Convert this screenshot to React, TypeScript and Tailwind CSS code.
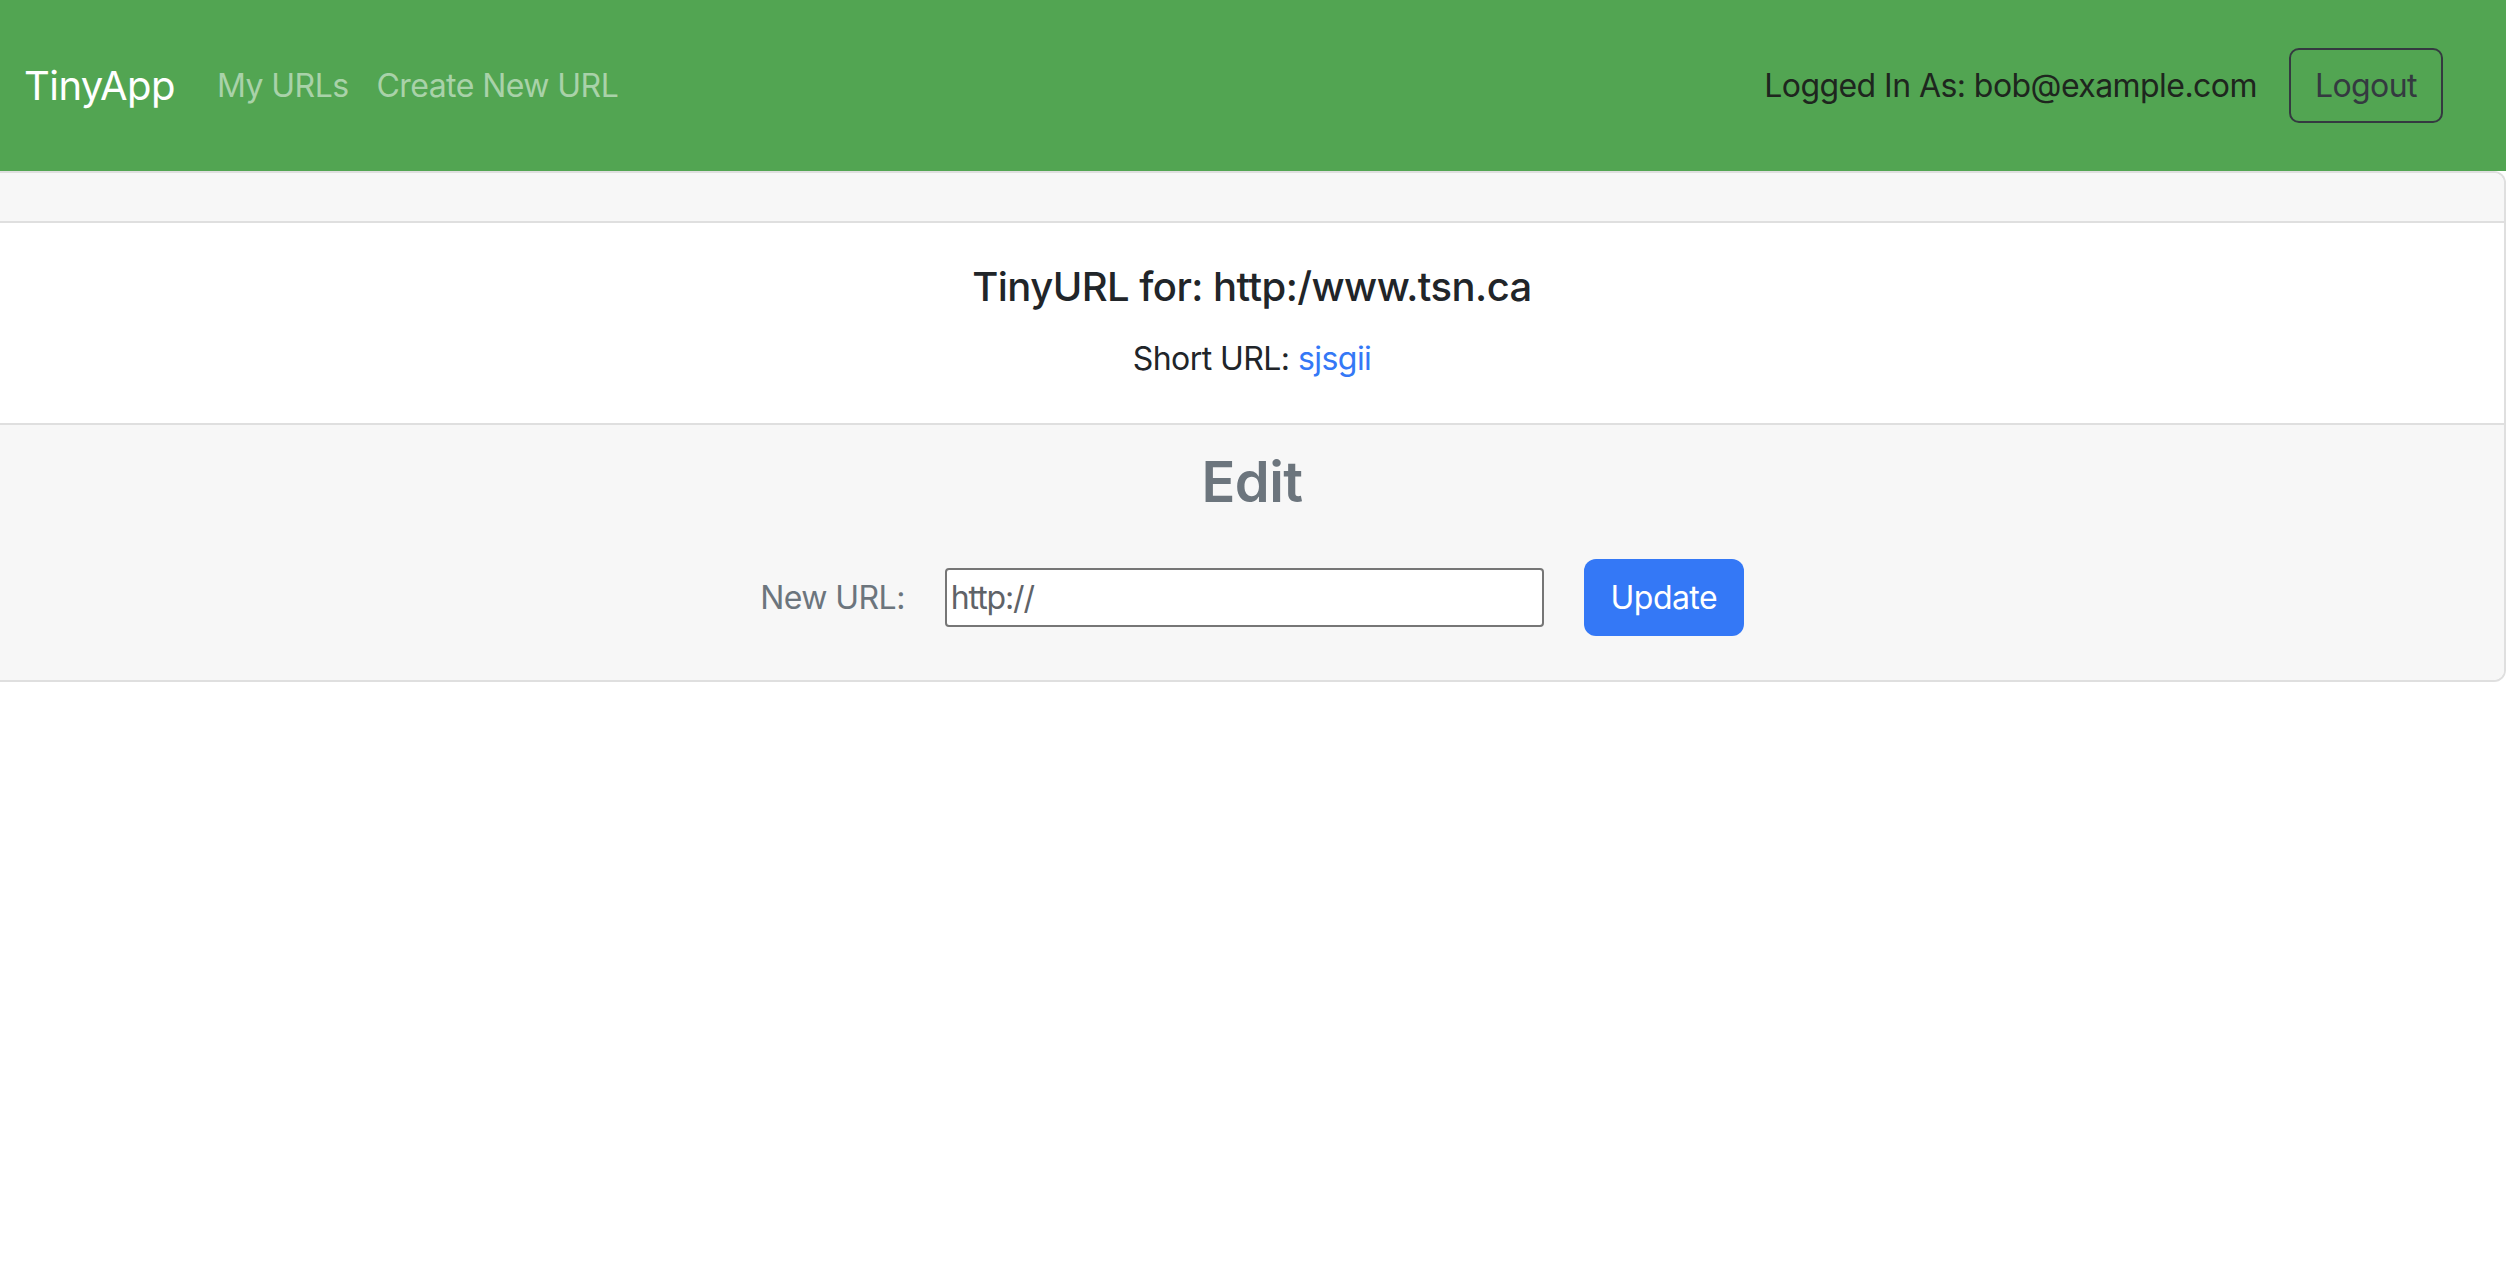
export default function App() {
  return (
    <div className="min-h-screen w-full bg-white font-['Inter','Noto_Sans',sans-serif] tracking-[-0.035em] text-[#212529]">
      {/* navbar */}
      <nav className="flex h-[171px] items-center justify-between bg-[#52a552] pl-[24px] pr-[63px]">
        <div className="flex items-center">
          <a href="#" className="mr-[42px] text-[40px] leading-[60px] text-white">
            TinyApp
          </a>
          <div className="flex items-center gap-[28px]">
            <a href="#" className="text-[32px] leading-[48px] text-[#a9d2a9]">
              My URLs
            </a>
            <a href="#" className="text-[32px] leading-[48px] text-[#a9d2a9]">
              Create New URL
            </a>
          </div>
        </div>
        <div className="flex items-center gap-[32px]">
          <span className="text-[32px] leading-[48px] text-[#1e261e]">Logged In As: bob@example.com</span>
          <button className="h-[75px] rounded-[10px] border-2 border-[#343a40] px-[24px] text-[32px] leading-[48px] text-[#343a40]">
            Logout
          </button>
        </div>
      </nav>

      {/* card */}
      <div className="rounded-r-[12px] border-y-2 border-r-2 border-[#dfdfdf]">
        <div className="h-[50px] rounded-tr-[10px] border-b-2 border-[#dfdfdf] bg-[#f7f7f7]" />
        <div className="px-[40px] py-[40px] text-center">
          <h5 className="mb-[24px] text-[40px] font-medium leading-[48px]">TinyURL for: http:/www.tsn.ca</h5>
          <p className="text-[32px] leading-[48px]">
            Short URL:{" "}
            <a href="#" className="text-[#3478f6]">
              sjsgii
            </a>
          </p>
        </div>
        <div className="rounded-br-[10px] border-t-2 border-[#dfdfdf] bg-[#f7f7f7] px-[40px] pb-[44px] pt-[24px] text-center">
          <h3 className="text-[56px] font-semibold leading-[67px] text-[#6c757d]">Edit</h3>
          <form className="mt-[43px] flex items-center justify-center gap-[40px]">
            <label className="text-[32px] leading-[48px] text-[#6c757d]">New URL:</label>
            <input
              type="text"
              defaultValue="http://"
              className="h-[59px] w-[599px] rounded-[4px] border-2 border-[#767676] bg-white px-[4px] text-[32px] tracking-[-0.035em] text-[#5f6368] outline-none"
            />
            <button
              type="button"
              className="h-[77px] w-[160px] rounded-[12px] bg-[#3478f6] text-[32px] leading-[48px] text-white"
            >
              Update
            </button>
          </form>
        </div>
      </div>
    </div>
  )
}
